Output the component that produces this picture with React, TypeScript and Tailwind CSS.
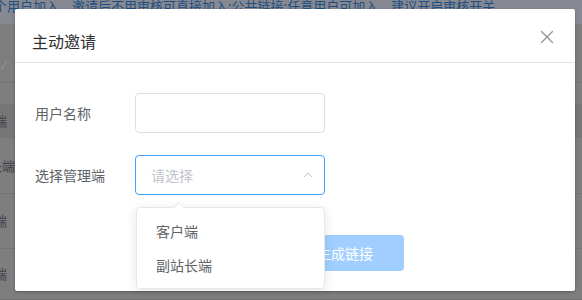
import { X, ChevronUp } from 'lucide-react'

const font = { fontFamily: '"Noto Sans CJK SC", "Noto Sans", sans-serif' }

const rows = [
  { h: 'h-[59px]', text: '', mark: true, bg: 'bg-[#7e7e7e]' },
  { h: 'h-[22px]', text: '', mark: false, bg: 'bg-[#7e7e7e]' },
  { h: 'h-[33px]', text: '户端', mark: false, bg: 'bg-[#767676]' },
  { h: 'h-[56px]', text: '站长端', mark: false, bg: 'bg-[#7e7e7e]' },
  { h: 'h-[55px]', text: '户端', mark: false, bg: 'bg-[#7e7e7e]' },
  { h: 'h-[51px]', text: '户端', mark: false, bg: 'bg-[#7e7e7e]' },
]

const App = () => {
  return (
    <div className="relative w-[582px] h-[300px] overflow-hidden bg-[#7e7e7e]" style={font}>
      {/* page behind the overlay */}
      <div className="h-[24px] bg-[#868991] overflow-hidden">
        <p className="-ml-[6px] -mt-[3px] whitespace-nowrap text-[13px] leading-[18px] text-[#1f4f82]">
          个用户加入，邀请后不用审核可直接加入;公共链接:任意用户可加入，建议开启审核开关
        </p>
      </div>
      <div>
        {rows.map((r, i) => (
          <div key={i} className={`${r.h} ${r.bg} border-b border-[#747474] flex items-center`}>
            {r.mark && <span className="mt-[22px] text-[10px] text-[#9a9a9a]">✓</span>}
            {r.text && (
              <span className={`text-[13px] text-[#3e4147] whitespace-nowrap ${r.text === '站长端' ? '-ml-[24px]' : '-ml-[19px]'}`}>
                {r.text}
              </span>
            )}
          </div>
        ))}
      </div>

      {/* dialog */}
      <div className="absolute left-[15px] top-[9px] w-[560px] h-[282px] bg-white rounded-[2px] shadow-[0_1px_3px_rgba(0,0,0,0.3)]">
        <div className="h-[54px] flex items-start justify-between pl-[17px] pr-[17px] pt-[20px] border-b border-[#e4e4e4]">
          <span className="text-[16px] leading-[24px] text-[#303133]">主动邀请</span>
          <X className="-mt-[3px] h-[22px] w-[22px] text-[#909399]" strokeWidth={1.3} />
        </div>

        <div className="pl-[20px] pt-[30px]">
          <div className="flex items-center h-[40px]">
            <label className="w-[100px] text-[14px] text-[#606266]">用户名称</label>
            <div className="w-[190px] h-[40px] rounded-[4px] border border-[#dcdfe6]" />
          </div>
          <div className="flex items-center h-[40px] mt-[22px]">
            <label className="w-[100px] text-[14px] text-[#606266]">选择管理端</label>
            <div className="w-[190px] h-[40px] rounded-[4px] border border-[#409eff] flex items-center justify-between pl-[15px] pr-[8px]">
              <span className="text-[14px] text-[#c0c4cc]">请选择</span>
              <ChevronUp className="h-[16px] w-[16px] text-[#c0c4cc]" strokeWidth={1.5} />
            </div>
          </div>
          <div className="mt-[40px] ml-[251px] w-[118px] h-[36px] rounded-[4px] bg-[#a0cfff] flex items-center justify-center text-[14px] text-white">
            生成链接
          </div>
        </div>

        {/* select dropdown */}
        <div className="absolute left-[121px] top-[198px] w-[189px] h-[82px] bg-white rounded-[4px] border border-[#e4e7ed] shadow-[0_2px_12px_rgba(0,0,0,0.1)] py-[6px]">
          <div className="absolute -top-[6px] left-[36px] w-0 h-0 border-x-[6px] border-x-transparent border-b-[6px] border-b-[#e4e7ed]" />
          <div className="absolute -top-[5px] left-[37px] w-0 h-0 border-x-[5px] border-x-transparent border-b-[5px] border-b-white" />
          <div className="h-[34px] flex items-center pl-[19px] text-[14px] text-[#606266]">客户端</div>
          <div className="h-[34px] flex items-center pl-[19px] text-[14px] text-[#606266]">副站长端</div>
        </div>
      </div>
    </div>
  )
}

export default App
